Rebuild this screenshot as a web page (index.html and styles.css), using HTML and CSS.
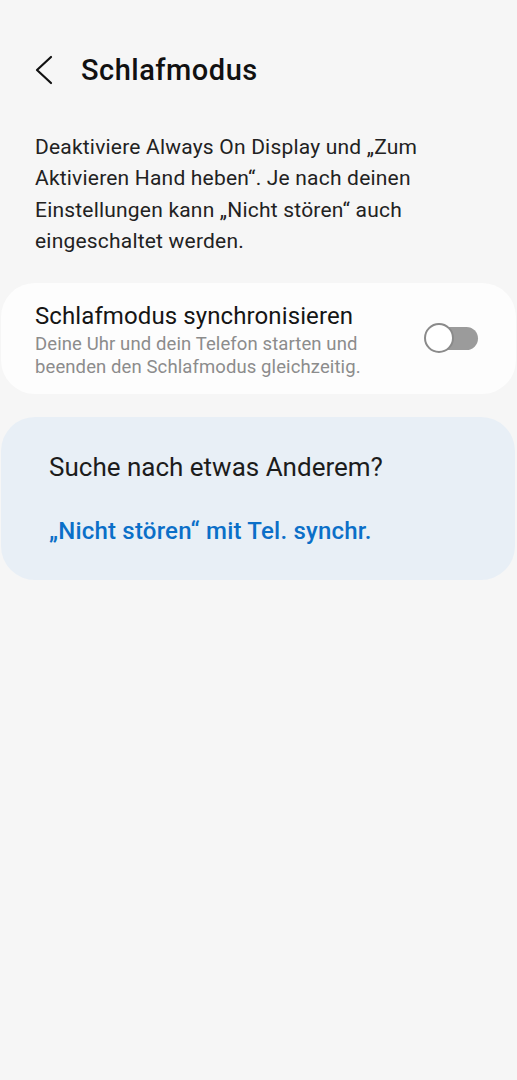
FILE: index.html
```html
<!DOCTYPE html>
<html lang="de">
<head>
    <meta charset="UTF-8">
    <title>Schlafmodus</title>
    <link rel="stylesheet" href="styles.css">
</head>
<body>
    <div class="header">
        <svg class="back" width="24" height="30" viewBox="0 0 24 30">
            <path d="M19 2 L5 15 L19 28" fill="none" stroke="#111" stroke-width="2.2" stroke-linecap="round" stroke-linejoin="round"/>
        </svg>
        <h1>Schlafmodus</h1>
    </div>

    <p class="intro">Deaktiviere Always On Display und „Zum Aktivieren Hand heben“. Je nach deinen Einstellungen kann „Nicht stören“ auch eingeschaltet werden.</p>

    <div class="card">
        <div class="card-text">
            <div class="card-title">Schlafmodus synchronisieren</div>
            <div class="card-sub">Deine Uhr und dein Telefon starten und beenden den Schlafmodus gleichzeitig.</div>
        </div>
        <div class="toggle">
            <div class="knob"></div>
        </div>
    </div>

    <div class="suggest">
        <div class="suggest-title">Suche nach etwas Anderem?</div>
        <a class="suggest-link" href="#">„Nicht stören“ mit Tel. synchr.</a>
    </div>
</body>
</html>
```

FILE: styles.css
```css
/* Page */
body {
    font-family: Roboto, "Noto Sans", sans-serif;
    background-color: #f6f6f6;
    margin: 0;
    color: #1c1c1c;
}

/* Header with back arrow */
.header {
    display: flex;
    align-items: center;
    padding: 53px 0 0 32px;
    height: 34px;
}

.back {
    display: block;
}

h1 {
    margin: 0 0 0 25px;
    font-size: 29px;
    font-weight: 500;
    letter-spacing: 0.5px;
    color: #111;
}

/* Intro text */
.intro {
    margin: 45px 30px 0 35px;
    font-size: 21px;
    line-height: 31.3px;
    letter-spacing: 0.2px;
    color: #222;
}

/* Sync card */
.card {
    display: flex;
    align-items: center;
    margin: 26px 1px 0 1px;
    padding: 18px 38px 15px 34px;
    background-color: #fdfdfd;
    border-radius: 34px;
}

.card-text {
    flex: 1;
}

.card-title {
    font-size: 24px;
    line-height: 30px;
    letter-spacing: 0.1px;
    color: #151515;
}

.card-sub {
    margin-top: 2px;
    font-size: 18.5px;
    line-height: 23px;
    letter-spacing: 0.1px;
    color: #8c8c8c;
    max-width: 350px;
}

.toggle {
    position: relative;
    width: 53px;
    height: 23px;
    border-radius: 12px;
    background-color: #9b9b9b;
    margin-top: -4px;
}

.knob {
    position: absolute;
    left: -1px;
    top: -4px;
    width: 26px;
    height: 26px;
    border-radius: 50%;
    background-color: #fff;
    border: 2px solid #8a8a8a;
}

/* Suggestion box */
.suggest {
    margin: 23px 2px 0 1px;
    padding: 35px 48px 34px 48px;
    background-color: #e8eff6;
    border-radius: 34px;
}

.suggest-title {
    font-size: 26px;
    line-height: 30px;
    color: #1c1c1c;
}

.suggest-link {
    display: block;
    margin-top: 34px;
    font-size: 24px;
    line-height: 30px;
    font-weight: 500;
    letter-spacing: 0.2px;
    color: #0b6fc8;
    text-decoration: none;
}
```
